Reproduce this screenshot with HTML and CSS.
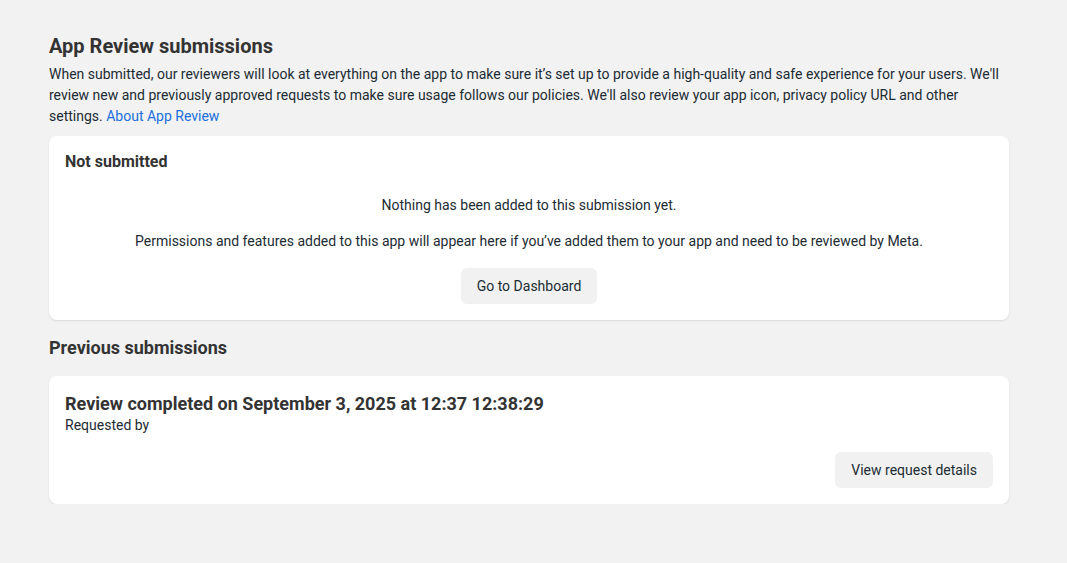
FILE: index.html
```html
<!DOCTYPE html>
<html lang="en">
<head>
<meta charset="utf-8">
<title>App Review</title>
<link rel="stylesheet" href="styles.css">
</head>
<body>
<main class="page">
  <h1 class="title">App Review submissions</h1>
  <p class="intro">When submitted, our reviewers will look at everything on the app to make sure it’s set up to provide a high-quality and safe experience for your users. We'll review new and previously approved requests to make sure usage follows our policies. We'll also review your app icon, privacy policy URL and other settings. <a class="link" href="#">About App Review</a></p>

  <section class="card">
    <h2 class="card-title">Not submitted</h2>
    <div class="empty">
      <p class="empty-line first">Nothing has been added to this submission yet.</p>
      <p class="empty-line">Permissions and features added to this app will appear here if you’ve added them to your app and need to be reviewed by Meta.</p>
      <button class="btn">Go to Dashboard</button>
    </div>
  </section>

  <h2 class="section-title">Previous submissions</h2>

  <section class="card">
    <h3 class="review-title">Review completed on September 3, 2025 at 12:37 12:38:29</h3>
    <p class="requested">Requested by</p>
    <div class="actions">
      <button class="btn">View request details</button>
    </div>
  </section>
</main>
</body>
</html>
```
FILE: styles.css
```css
html, body {
  margin: 0;
  padding: 0;
  background: #f2f2f2;
}
body {
  font-family: Roboto, "Liberation Sans", Arial, sans-serif;
  color: #1c2b33;
  -webkit-font-smoothing: antialiased;
}
.page {
  width: 960px;
  margin: 0 0 0 49px;
  padding-top: 34px;
}
.title {
  margin: 0;
  font-size: 20px;
  line-height: 24px;
  font-weight: 700;
  color: #333333;
}
.intro {
  margin: 6px 0 0;
  font-size: 14px;
  line-height: 21px;
  color: #1c2b33;
}
.link {
  color: #216fdb;
  text-decoration: none;
}
.card {
  margin-top: 9px;
  background: #ffffff;
  border-radius: 8px;
  box-shadow: 0 1px 2px rgba(0, 0, 0, 0.1);
  padding: 16px;
}
.card-title {
  margin: 0;
  padding-top: 1px;
  font-size: 16px;
  line-height: 18px;
  font-weight: 700;
  color: #333333;
}
.empty {
  display: flex;
  flex-direction: column;
  align-items: center;
  text-align: center;
}
.empty-line {
  margin: 16px 0 0;
  font-size: 14px;
  line-height: 20px;
}
.empty-line.first {
  margin-top: 24px;
}
.btn {
  margin-top: 17px;
  height: 36px;
  padding: 0 16px;
  border: none;
  border-radius: 6px;
  background: #f1f1f1;
  color: #1c2b33;
  font-family: inherit;
  font-size: 14px;
  font-weight: 400;
  cursor: pointer;
}
.section-title {
  margin: 17px 0 0;
  font-size: 18px;
  line-height: 22px;
  font-weight: 700;
  color: #333333;
}
.section-title + .card {
  margin-top: 17px;
}
.review-title {
  margin: 0;
  font-size: 18px;
  line-height: 24px;
  font-weight: 700;
  color: #333333;
}
.requested {
  margin: 0;
  font-size: 14px;
  line-height: 18px;
}
.actions {
  display: flex;
  justify-content: flex-end;
}
.actions .btn {
  margin-top: 18px;
}
```
